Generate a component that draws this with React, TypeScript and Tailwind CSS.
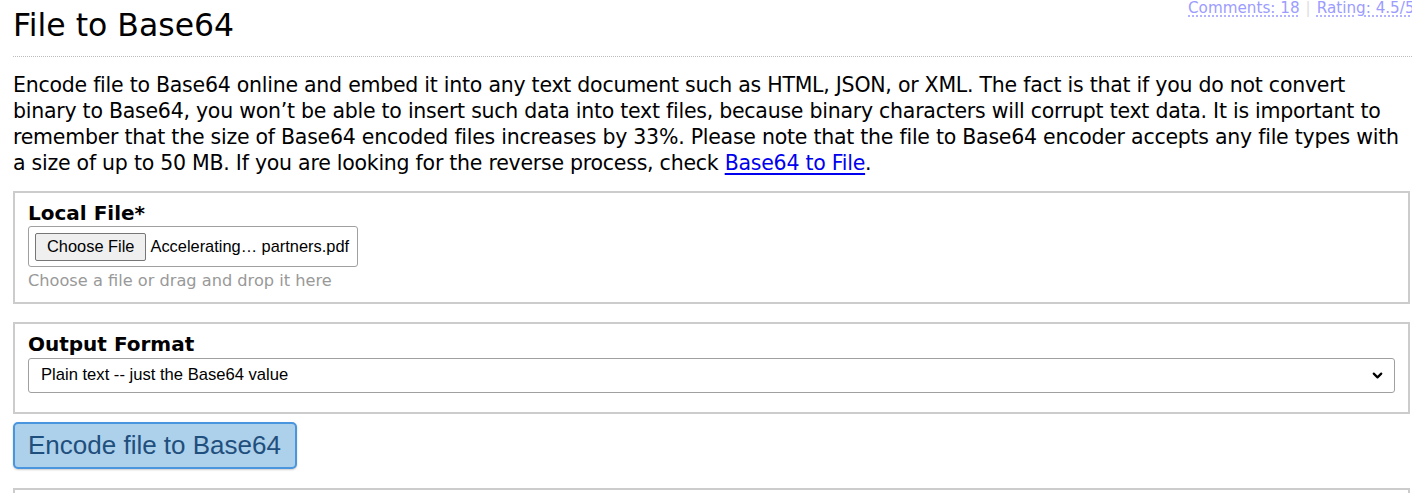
import { ChevronDown } from "lucide-react";

const verdana = "font-['Verdana','DejaVu_Sans',sans-serif]";
const arial = "font-['Arial','Liberation_Sans',sans-serif]";

function Panel({
  label,
  bottom,
  children,
}: {
  label: string;
  bottom: string;
  children: React.ReactNode;
}) {
  return (
    <div className={`border-2 border-[#cccccc] bg-white px-[13px] pt-[8px] ${bottom}`}>
      <div className="text-[20px] font-bold leading-[24px] text-black">{label}</div>
      {children}
    </div>
  );
}

export default function App() {
  return (
    <div className={`${verdana} bg-white text-black h-[493px] w-[1412px] overflow-hidden`}>
      <div className="pl-[13px] w-[1440px]">
        <div className="relative">
          <div className="absolute left-[1175px] top-[-1px] text-[15.2px] leading-[18px] whitespace-nowrap">
            <a href="#" className="text-[#9c9cff] underline decoration-dotted underline-offset-[3px]">
              Comments: 18
            </a>
            <span className="mx-[6px] text-[#e0e0e0]">|</span>
            <a href="#" className="text-[#9c9cff] underline decoration-dotted underline-offset-[3px]">
              Rating: 4.5/5
            </a>
          </div>
          <h1 className="pt-[6px] pb-[12px] text-[31.5px] leading-[38px] font-normal border-b border-dotted border-[#bbbbbb]">
            File to Base64
          </h1>
        </div>

        <p className="mt-[15px] w-[1420px] text-[20.5px] leading-[26px] tracking-[-0.25px] whitespace-nowrap">
          Encode file to Base64 online and embed it into any text document such as HTML, JSON, or XML. The fact is
          that if you do not convert
          <br />
          binary to Base64, you won’t be able to insert such data into text files, because binary characters will
          corrupt text data. It is important to
          <br />
          remember that the size of Base64 encoded files increases by 33%. Please note that the file to Base64 encoder
          accepts any file types with
          <br />a size of up to 50 MB. If you are looking for the reverse process, check{" "}
          <a href="#" className="text-[#0000ee] underline underline-offset-[3px]">
            Base64 to File
          </a>
          .
        </p>

        <div className="mt-[15px] w-[1397px] flex flex-col gap-[18px]">
          <Panel label="Local File*" bottom="pb-[10px]">
            <div
              className={`${arial} mt-[1px] inline-flex items-center gap-[4px] border border-[#a0a0a0] rounded-[3px] pl-[6px] pr-[8px] h-[41px] text-[16.4px]`}
            >
              <span className="border border-[#767676] bg-[#efefef] rounded-[2px] px-[11px] h-[28px] flex items-center">
                Choose File
              </span>
              <span>Accelerating… partners.pdf</span>
            </div>
            <div className="mt-[3px] text-[16.2px] leading-[22px] text-[#999999]">
              Choose a file or drag and drop it here
            </div>
          </Panel>

          <Panel label="Output Format" bottom="pb-[19px]">
            <div
              className={`${arial} mt-[2px] flex items-center justify-between border border-[#a0a0a0] rounded-[3px] h-[35px] pl-[12px] pr-[9px] text-[16.6px]`}
            >
              <span>Plain text -- just the Base64 value</span>
              <ChevronDown size={15} strokeWidth={3.5} />
            </div>
          </Panel>
        </div>

        <button
          className={`${arial} mt-[8px] h-[47px] pl-[13px] pr-[14px] rounded-[5px] border-2 border-[#4a96de] bg-[#add0eb] text-[#1f4f7c] text-[26px] shadow-[0_1px_2px_rgba(0,0,0,0.2)]`}
        >
          Encode file to Base64
        </button>

        <div className="mt-[19px] w-[1397px] h-[40px] border-2 border-[#cccccc]" />
      </div>
    </div>
  );
}
